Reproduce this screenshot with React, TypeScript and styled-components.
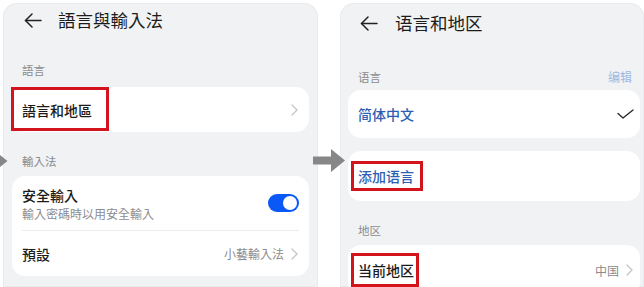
import React from "react";
import styled, { createGlobalStyle } from "styled-components";

const Global = createGlobalStyle`
  html, body { margin: 0; padding: 0; background: #ffffff; }
  body { width: 644px; height: 287px; overflow: hidden; }
`;

const TC = `"Noto Sans CJK TC", "Noto Sans", sans-serif`;
const SC = `"Noto Sans CJK SC", "Noto Sans", sans-serif`;

const Stage = styled.div`
  position: relative;
  display: flex;
  align-items: stretch;
  width: 644px;
  height: 287px;
  padding-top: 3px;
  box-sizing: border-box;
  overflow: hidden;
  background: #ffffff;
`;

const Panel = styled.div<{ $w: number; $font: string; $left: number; $pl: number; $pr: number }>`
  width: ${(p) => p.$w}px;
  margin-left: ${(p) => p.$left}px;
  flex-shrink: 0;
  box-sizing: border-box;
  padding: 0 ${(p) => p.$pr}px 0 ${(p) => p.$pl}px;
  background: #f1f2f4;
  border-radius: 14px 14px 0 0;
  box-shadow: inset 0 0 0 1px #eaebee;
  font-family: ${(p) => p.$font};
  display: flex;
  flex-direction: column;
  overflow: hidden;
  & > * { flex-shrink: 0; }
`;

const Header = styled.div<{ $h: number; $ax: number; $gap: number }>`
  height: ${(p) => p.$h}px;
  display: flex;
  align-items: center;
  padding-left: ${(p) => p.$ax}px;
  gap: ${(p) => p.$gap}px;
`;

const Title = styled.div`
  font-size: 17.5px;
  font-weight: 400;
  color: #1c1c1c;
  line-height: 22px;
`;

const Label = styled.div<{ $pt: number; $pb: number }>`
  display: flex;
  justify-content: space-between;
  padding: ${(p) => p.$pt}px 8px ${(p) => p.$pb}px 10px;
  font-size: 11.5px;
  line-height: 16px;
  color: #8a8b8e;
`;

const EditLink = styled.span`
  color: #9fb9e2;
  font-size: 12px;
`;

const Card = styled.div<{ $mb?: number }>`
  background: #ffffff;
  border-radius: 13px;
  margin-bottom: ${(p) => p.$mb ?? 0}px;
  display: flex;
  flex-direction: column;
`;

const Row = styled.div<{ $h: number; $pr?: number }>`
  height: ${(p) => p.$h}px;
  display: flex;
  align-items: center;
  justify-content: space-between;
  padding: 0 ${(p) => p.$pr ?? 10}px 0 10px;
  box-sizing: border-box;
`;

const Divider = styled.div`
  height: 1px;
  background: #ececee;
  margin: 0 10px;
`;

const RowText = styled.div`
  display: flex;
  flex-direction: column;
`;

const RowTitle = styled.span<{ $blue?: boolean }>`
  position: relative;
  font-size: 14px;
  font-weight: 500;
  line-height: 20px;
  color: ${(p) => (p.$blue ? "#2c5fb3" : "#1c1c1c")};
`;

const SubTitle = styled.span`
  font-size: 12px;
  line-height: 16px;
  color: #8c8d90;
  margin-top: 1px;
`;

const Mark = styled.span<{ $t: number; $b: number; $l: number; $r: number }>`
  position: absolute;
  top: ${(p) => p.$t}px;
  bottom: ${(p) => p.$b}px;
  left: ${(p) => p.$l}px;
  right: ${(p) => p.$r}px;
  border: 3px solid #d3141d;
  pointer-events: none;
`;

const Trail = styled.div`
  display: flex;
  align-items: center;
  gap: 7px;
  font-size: 12px;
  color: #8a8b8e;
`;

const Toggle = styled.div`
  width: 31px;
  height: 18px;
  border-radius: 9px;
  background: #0a59f7;
  display: flex;
  align-items: center;
  justify-content: flex-end;
  padding: 0 2px;
  box-sizing: border-box;
`;

const Knob = styled.div`
  width: 14px;
  height: 14px;
  border-radius: 50%;
  background: #ffffff;
`;

const Spacer = styled.div`
  width: 22px;
  flex-shrink: 0;
`;

const ArrowSvg = styled.svg<{ $x: number; $y: number }>`
  position: absolute;
  left: ${(p) => p.$x}px;
  top: ${(p) => p.$y}px;
`;

const Back = () => (
  <svg width="18" height="15" viewBox="0 0 18 15" fill="none" stroke="#222" strokeWidth="1.5" strokeLinecap="round" strokeLinejoin="round">
    <line x1="1.5" y1="7.5" x2="17" y2="7.5" />
    <polyline points="8,1 1.5,7.5 8,14" />
  </svg>
);

const Chevron = () => (
  <svg width="7" height="12" viewBox="0 0 7 12" fill="none" stroke="#c3c4c7" strokeWidth="1.3" strokeLinecap="round" strokeLinejoin="round">
    <polyline points="1,1 6,6 1,11" />
  </svg>
);

const Check = () => (
  <svg width="17" height="10" viewBox="0 0 17 10" fill="none" stroke="#2a2a2a" strokeWidth="1.4" strokeLinecap="round" strokeLinejoin="round">
    <polyline points="1,4.5 6,9 16,1" />
  </svg>
);

export default function App() {
  return (
    <>
      <Global />
      <Stage>
        <Panel $w={315} $left={3} $pl={9} $pr={9} $font={TC}>
          <Header $h={34} $ax={12} $gap={16}>
            <Back />
            <Title>語言與輸入法</Title>
          </Header>
          <Label $pt={25} $pb={9}>
            <span>語言</span>
          </Label>
          <Card>
            <Row $h={45} $pr={11}>
              <RowTitle>
                語言和地區
                <Mark $t={-13} $b={-11} $l={-11} $r={-17} />
              </RowTitle>
              <Chevron />
            </Row>
          </Card>
          <Label $pt={21} $pb={7}>
            <span>輸入法</span>
          </Label>
          <Card>
            <Row $h={54}>
              <RowText>
                <RowTitle>安全輸入</RowTitle>
                <SubTitle>輸入密碼時以用安全輸入</SubTitle>
              </RowText>
              <Toggle>
                <Knob />
              </Toggle>
            </Row>
            <Divider />
            <Row $h={45} $pr={11}>
              <RowTitle>預設</RowTitle>
              <Trail>
                <span>小藝輸入法</span>
                <Chevron />
              </Trail>
            </Row>
          </Card>
        </Panel>
        <Spacer />
        <Panel $w={304} $left={0} $pl={8} $pr={4} $font={SC}>
          <Header $h={40} $ax={12} $gap={17}>
            <Back />
            <Title>语言和地区</Title>
          </Header>
          <Label $pt={26} $pb={5}>
            <span>语言</span>
            <EditLink>编辑</EditLink>
          </Label>
          <Card $mb={13}>
            <Row $h={48} $pr={6}>
              <RowTitle $blue>简体中文</RowTitle>
              <Check />
            </Row>
          </Card>
          <Card>
            <Row $h={50}>
              <RowTitle $blue>
                添加语言
                <Mark $t={-5} $b={-5} $l={-7} $r={-9} />
              </RowTitle>
            </Row>
          </Card>
          <Label $pt={21} $pb={7}>
            <span>地区</span>
          </Label>
          <Card>
            <Row $h={50} $pr={7}>
              <RowTitle>
                当前地区
                <Mark $t={-7} $b={-7} $l={-7} $r={-5} />
              </RowTitle>
              <Trail>
                <span>中国</span>
                <Chevron />
              </Trail>
            </Row>
          </Card>
        </Panel>
        <ArrowSvg $x={0} $y={150} width="8" height="22" viewBox="0 0 8 22">
          <polygon points="0,5 7.5,11 0,17" fill="#878787" />
        </ArrowSvg>
        <ArrowSvg $x={313} $y={149} width="32" height="23" viewBox="0 0 32 23">
          <polygon points="0,7.5 18,7.5 18,0 32,11.5 18,23 18,15.5 0,15.5" fill="#878787" />
        </ArrowSvg>
      </Stage>
    </>
  );
}
